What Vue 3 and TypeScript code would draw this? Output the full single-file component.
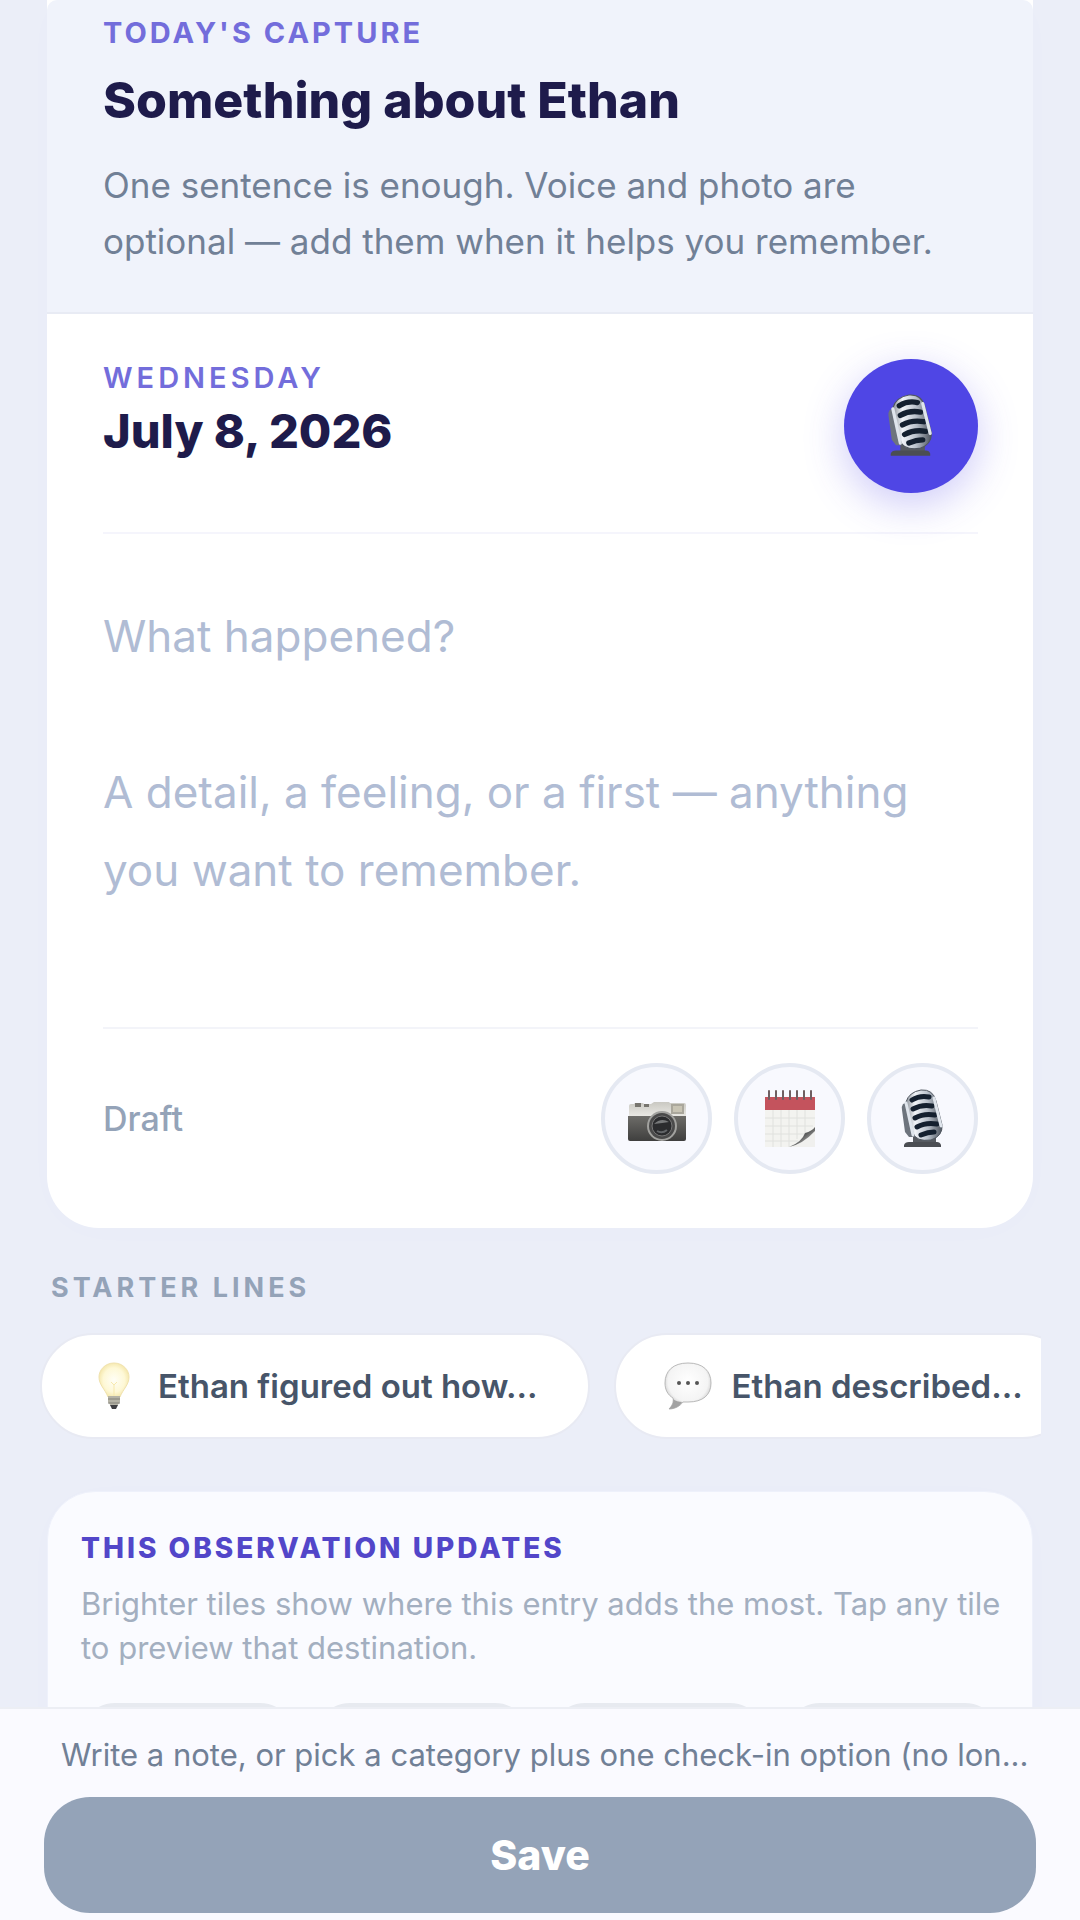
<script setup lang="ts">
import { ref } from 'vue'

type IconName = 'camera' | 'calendar' | 'mic'

const note = ref('')
const placeholder = 'What happened?\n\nA detail, a feeling, or a first — anything you want to remember.'

const tools: { icon: IconName; label: string }[] = [
  { icon: 'camera', label: 'Add photo' },
  { icon: 'calendar', label: 'Change date' },
  { icon: 'mic', label: 'Record voice' },
]

const starters = [
  { icon: 'bulb', text: 'Ethan figured out how...' },
  { icon: 'bubble', text: 'Ethan described...' },
]

const tiles = ['Destination 1', 'Destination 2', 'Destination 3', 'Destination 4']
</script>

<template>
  <svg class="sprite" aria-hidden="true">
    <defs>
      <linearGradient id="metal" x1="0" x2="1">
        <stop offset="0" stop-color="#8b9199" />
        <stop offset="0.25" stop-color="#f1f4f8" />
        <stop offset="0.6" stop-color="#b9c1cb" />
        <stop offset="1" stop-color="#4d545e" />
      </linearGradient>
      <linearGradient id="silver" x1="0" x2="0" y1="0" y2="1">
        <stop offset="0" stop-color="#c9c8c2" />
        <stop offset="1" stop-color="#f0efea" />
      </linearGradient>
      <linearGradient id="leather" x1="0" x2="0" y1="0" y2="1">
        <stop offset="0" stop-color="#6d6c68" />
        <stop offset="1" stop-color="#3f3f3e" />
      </linearGradient>
      <radialGradient id="glow" cx="0.5" cy="0.5" r="0.55">
        <stop offset="0" stop-color="#fffef6" />
        <stop offset="0.65" stop-color="#fef8d6" />
        <stop offset="1" stop-color="#f3e4a4" />
      </radialGradient>
      <radialGradient id="bubble-fill" cx="0.5" cy="0.4" r="0.62">
        <stop offset="0" stop-color="#ffffff" />
        <stop offset="0.7" stop-color="#f4f4f4" />
        <stop offset="1" stop-color="#b4b4b4" />
      </radialGradient>
      <linearGradient id="curl" x1="0" x2="1" y1="0" y2="1">
        <stop offset="0" stop-color="#d4d4d2" />
        <stop offset="0.5" stop-color="#5b5c5c" />
        <stop offset="0.8" stop-color="#b8b8b6" />
      </linearGradient>
    </defs>
    <symbol id="icon-mic" viewBox="0 0 60 60">
      <path d="M20 46l4-5h16l3 5v8H20z" fill="#565a60" />
      <path d="M11 56q1-3 5-3h28q3 0 4 3v2H11z" fill="#4b4e53" />
      <path d="M10 15q-2 3-1 6l3 22 4 5h8l-6-36z" fill="#6d747d" />
      <path d="M13 13Q16 3 28 1q12-1 15 11l6 24q1 11-11 15-15 2-18-7z" fill="url(#metal)" stroke="#4f565f" stroke-width="1" />
      <g fill="none" stroke="#14202f" stroke-width="5" stroke-linecap="round">
        <path d="M19 11q8-5 17-3" />
        <path d="M20 20q9-5 19-3" />
        <path d="M22 29q9-5 20-3" />
        <path d="M24 38q9-5 20-3" />
        <path d="M28 46q7-3 13-3" />
      </g>
      <path d="M13 14l7 32M41 9l7 28" fill="none" stroke="#dfe5ec" stroke-width="3" stroke-linecap="round" />
    </symbol>
    <symbol id="icon-camera" viewBox="0 0 60 60">
      <path d="M2 17q0-2 2-2h3l1-1h8l1 1h7l3-2h15l1 1h14q2 0 2 2v14H2z" fill="url(#silver)" />
      <path d="M44 15h13v10H44z" fill="#aaa79c" />
      <path d="M46 17h9v6h-9z" fill="#c8c4b4" />
      <path d="M8 14h6v4H8zM17 15h5v3h-5z" fill="#77756f" />
      <path d="M1 27h58v23q0 2-2 2H3q-2 0-2-2z" fill="url(#leather)" />
      <circle cx="35" cy="37" r="15" fill="#a2a29f" />
      <circle cx="35" cy="37" r="13" fill="#4a4a4a" />
      <circle cx="35" cy="37" r="10" fill="#2b2c2e" stroke="#777" stroke-width="1" />
      <path d="M27 35q7-7 15-2-6 1-15 2z" fill="#77797a" />
      <path d="M30 42q5 3 10-1" fill="none" stroke="#626568" stroke-width="2" />
    </symbol>
    <symbol id="icon-calendar" viewBox="0 0 60 60">
      <path d="M5 8h50v34L31 58H5z" fill="#f3f3f0" />
      <path d="M5 8h50v13H5z" fill="#c4535d" />
      <g stroke="#e0e1de" stroke-width="1" fill="none">
        <path d="M5 29h50M5 37h48M5 45h41M5 52h33M13 21v37M21 21v37M29 21v37M37 21v29M45 21v24" />
      </g>
      <g stroke="#6f5f61" stroke-width="2" stroke-linecap="round">
        <path d="M9 2v8M16 2v8M23 2v8M30 2v8M37 2v8M44 2v8M51 2v8" />
      </g>
      <path d="M55 40v18H30z" fill="#f0f0ee" />
      <path d="M55 38q-3 4-10 6-3 9-16 14 14-3 26-16z" fill="url(#curl)" />
    </symbol>
    <symbol id="icon-bulb" viewBox="0 0 48 48">
      <path d="M24 1C15 1 9 8 9 15c0 8 6 12 9 20h12c3-8 9-12 9-20C39 8 33 1 24 1z" fill="url(#glow)" stroke="#f0e2ae" stroke-width="1" />
      <path d="M21 20l3 3 3-3M24 23v11" fill="none" stroke="#f7e9ae" stroke-width="1" />
      <path d="M18 34h12v6l-3 4h-6l-3-4z" fill="#b5b3a6" />
      <path d="M18 37h12M18 41h12" stroke="#85837a" stroke-width="1" />
      <path d="M20 43h8l-2 4h-4z" fill="#3f3f42" />
    </symbol>
    <symbol id="icon-bubble" viewBox="0 0 48 48">
      <path d="M24 1C9 1 1 9 1 21c0 7 3 12 8 15 1 4-1 8-4 11 6 0 11-3 14-7h5c15 0 23-7 23-19S39 1 24 1z" fill="url(#bubble-fill)" stroke="#b9b9b9" stroke-width="1" />
      <path d="M9 37c1 4-1 7-4 10 6 0 11-3 13-7-3 0-7-1-9-3z" fill="#a2a2a2" />
      <g fill="#555"><circle cx="15" cy="21" r="2" /><circle cx="24" cy="21" r="2" /><circle cx="33" cy="21" r="2" /></g>
    </symbol>
  </svg>

  <div class="app">
    <main class="scroll">
      <section class="card capture">
        <header class="intro">
          <p class="eyebrow">TODAY'S CAPTURE</p>
          <h1>Something about Ethan</h1>
          <p class="lead">One sentence is enough. Voice and photo are optional — add them when it helps you remember.</p>
        </header>
        <div class="sheet">
          <div class="date-row">
            <div class="date">
              <p class="eyebrow weekday">WEDNESDAY</p>
              <h2>July 8, 2026</h2>
            </div>
            <button class="record" type="button" aria-label="Record voice note">
              <svg><use href="#icon-mic" /></svg>
            </button>
          </div>
          <textarea v-model="note" class="note" :placeholder="placeholder" aria-label="Note"></textarea>
          <div class="tool-row">
            <span class="status">Draft</span>
            <div class="tools">
              <button v-for="t in tools" :key="t.icon" class="tool" type="button" :aria-label="t.label">
                <svg><use :href="`#icon-${t.icon}`" /></svg>
              </button>
            </div>
          </div>
        </div>
      </section>

      <h3 class="section-label">STARTER LINES</h3>
      <div class="chips">
        <button v-for="s in starters" :key="s.icon" class="chip" type="button">
          <svg><use :href="`#icon-${s.icon}`" /></svg>
          <span>{{ s.text }}</span>
        </button>
      </div>

      <section class="card updates">
        <h3>THIS OBSERVATION UPDATES</h3>
        <p>Brighter tiles show where this entry adds the most. Tap any tile to preview that destination.</p>
        <div class="tiles">
          <button v-for="t in tiles" :key="t" class="tile" type="button" :aria-label="t"></button>
        </div>
      </section>
    </main>

    <footer class="save-bar">
      <p>Write a note, or pick a category plus one check-in option (no lon...</p>
      <button class="save" type="button">Save</button>
    </footer>
  </div>
</template>

<style>
body {
  background: #ebeef8;
}
</style>

<style scoped>
* {
  box-sizing: border-box;
}
p,
h1,
h2,
h3 {
  margin: 0;
}
button {
  font: inherit;
  border: 0;
  padding: 0;
  cursor: pointer;
}
.sprite {
  position: absolute;
  width: 0;
  height: 0;
}
.app {
  display: flex;
  flex-direction: column;
  height: 100vh;
  font-family: Inter, 'Liberation Sans', sans-serif;
  background: #ebeef8;
}
.scroll {
  flex: 1;
  min-height: 0;
  overflow: hidden;
  padding: 0 47px;
}
.card {
  box-shadow: 0 4px 40px rgba(79, 70, 229, 0.01);
}
.capture {
  border-radius: 0 0 52px 52px;
  background: #fff;
}
.intro {
  padding: 16px 56px 43px;
  border-bottom: 2px solid #e8ebf4;
  border-radius: 10px 10px 0 0;
  background: #f0f3fb;
}
.eyebrow {
  font-size: 29px;
  line-height: 34px;
  font-weight: 700;
  letter-spacing: 3px;
  color: #736ddb;
}
.eyebrow.weekday {
  font-weight: 600;
  letter-spacing: 4px;
}
h1 {
  margin-top: 20px;
  font-size: 50px;
  line-height: 60px;
  font-weight: 800;
  color: #1e1b4b;
}
.lead {
  margin-top: 27px;
  font-size: 35px;
  line-height: 56px;
  color: #718096;
}
.sheet {
  padding: 45px 55px 54px 56px;
}
.date-row {
  display: flex;
  justify-content: space-between;
  align-items: flex-start;
  padding-bottom: 39px;
  border-bottom: 2px solid #f5f5fc;
}
.date {
  padding-top: 2px;
}
h2 {
  margin-top: 8px;
  font-size: 47px;
  line-height: 56px;
  font-weight: 800;
  color: #1e1b4b;
}
.record {
  display: grid;
  place-items: center;
  width: 134px;
  height: 134px;
  border-radius: 50%;
  background: #4f46e5;
  box-shadow: 0 12px 40px rgba(79, 70, 229, 0.28);
}
.record svg {
  width: 64px;
  height: 64px;
}
.note {
  display: block;
  width: 100%;
  height: 493px;
  padding: 63px 0 0;
  border: 0;
  outline: 0;
  resize: none;
  background: transparent;
  font: 400 44px/78px Inter, 'Liberation Sans', sans-serif;
  color: #1e1b4b;
}
.note::placeholder {
  color: #b0bcd4;
  opacity: 1;
}
.tool-row {
  display: flex;
  justify-content: space-between;
  align-items: center;
  padding-top: 34px;
  border-top: 2px solid #f3f4f9;
}
.status {
  font-size: 34px;
  line-height: 40px;
  font-weight: 500;
  color: #94a3b8;
}
.tools {
  display: flex;
  gap: 22px;
}
.tool {
  display: grid;
  place-items: center;
  width: 111px;
  height: 111px;
  border: 4px solid #e5e9f2;
  border-radius: 50%;
  background: #f8f9fe;
}
.tool svg {
  width: 60px;
  height: 60px;
}
.section-label {
  margin: 43px 4px 0;
  font-size: 27px;
  line-height: 34px;
  font-weight: 700;
  letter-spacing: 4px;
  color: #94a3b8;
}
.chips {
  display: flex;
  gap: 24px;
  margin: 28px -8px 0 -7px;
  overflow: hidden;
}
.chip {
  flex: none;
  display: flex;
  align-items: center;
  gap: 20px;
  height: 106px;
  padding: 0 50px 0 48px;
  border: 2px solid #e8eaf3;
  border-radius: 53px;
  background: #fff;
  font-size: 33px;
  line-height: 40px;
  font-weight: 600;
  color: #475569;
}
.chip svg {
  width: 48px;
  height: 48px;
}
.updates {
  margin-top: 52px;
  padding: 39px 33px;
  border: 1px solid #eef1fb;
  border-radius: 48px;
  background: #fafbff;
}
.updates h3 {
  font-size: 28px;
  line-height: 34px;
  font-weight: 800;
  letter-spacing: 3px;
  color: #5246c9;
}
.updates p {
  margin: 17px -8px 0 0;
  font-size: 31px;
  line-height: 44px;
  color: #a3afc0;
}
.tiles {
  display: grid;
  grid-template-columns: repeat(4, 1fr);
  gap: 22px;
  margin-top: 33px;
}
.tile {
  height: 213px;
  border: 4px solid #e7eaf0;
  border-radius: 34px;
  background: #f3f4f8;
}
.save-bar {
  padding: 26px 44px 7px;
  border-top: 2px solid #eceef4;
  background: #fafaff;
}
.save-bar p {
  padding-left: 17px;
  white-space: nowrap;
  font-size: 31px;
  line-height: 40px;
  color: #718096;
}
.save {
  display: block;
  width: 100%;
  height: 116px;
  margin-top: 22px;
  border-radius: 46px;
  background: #94a3b8;
  color: #fff;
  font-size: 41px;
  font-weight: 800;
}
</style>
